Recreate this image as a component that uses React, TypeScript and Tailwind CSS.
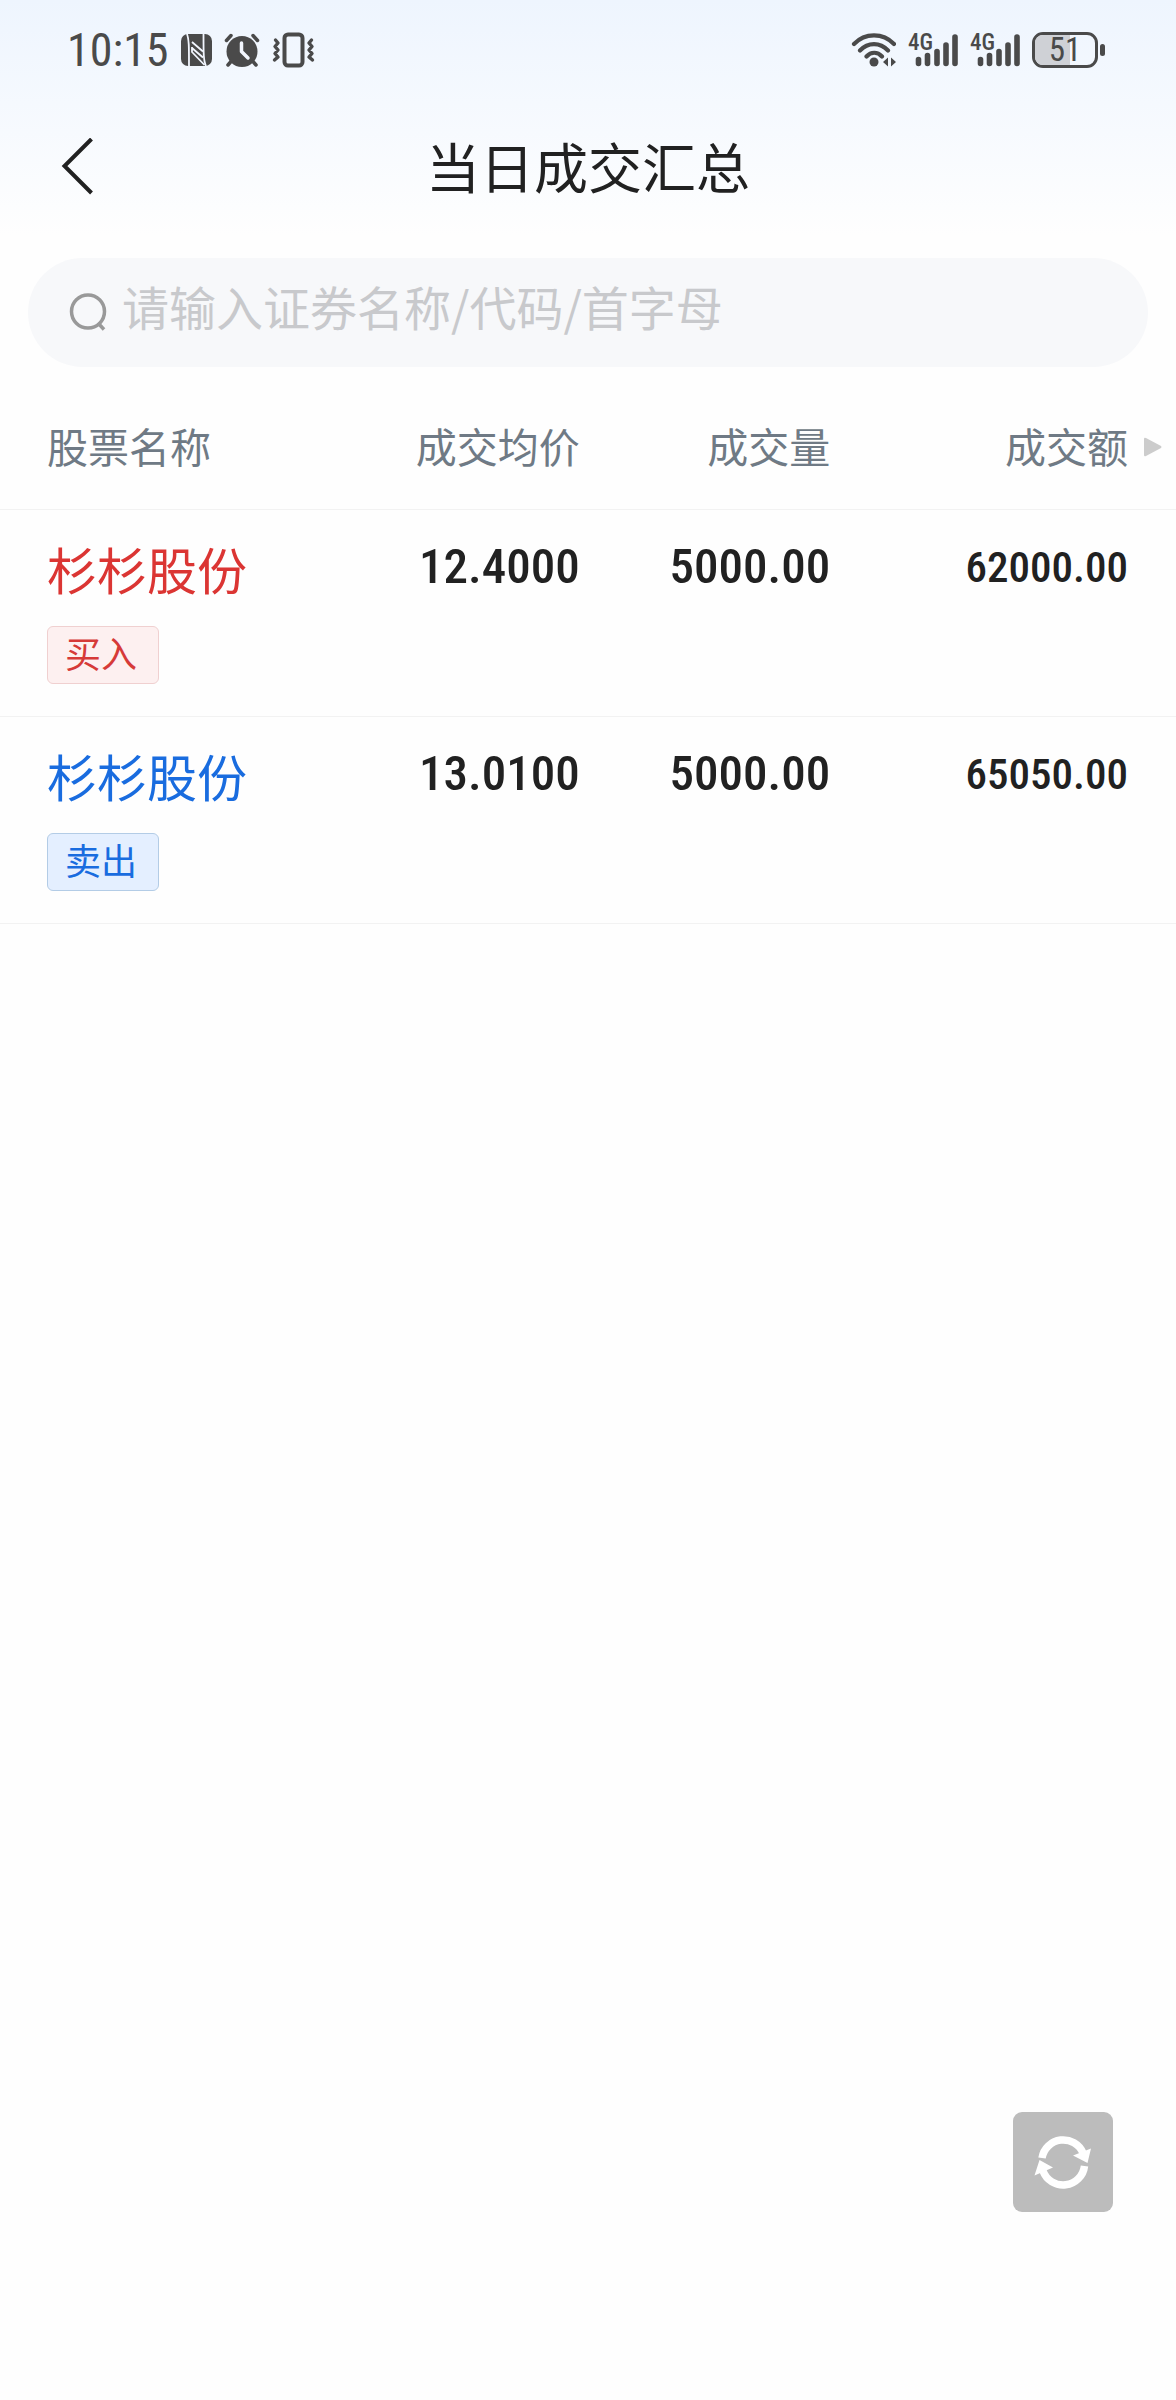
import type { ReactNode } from 'react'

interface Deal {
  id: number
  name: string
  side: 'buy' | 'sell'
  price: string
  volume: string
  amount: string
}

const deals: Deal[] = [
  { id: 1, name: '杉杉股份', side: 'buy', price: '12.4000', volume: '5000.00', amount: '62000.00' },
  { id: 2, name: '杉杉股份', side: 'sell', price: '13.0100', volume: '5000.00', amount: '65050.00' },
]

const sideStyles = {
  buy: { label: '买入', name: 'text-[#db3533]', tag: 'border-[#f0d0d0] bg-[#fdf0f0] text-[#d63a38]' },
  sell: { label: '卖出', name: 'text-[#196cdf]', tag: 'border-[#b3cce6] bg-[#e4efff] text-[#196cdf]' },
}

function NfcIcon() {
  return (
    <svg width="31" height="32" viewBox="0 0 31 32" fill="none" aria-hidden="true">
      <rect width="31" height="32" rx="7" fill="#4a4a4a" />
      <path d="M6 0C8 5 8 12 8 32M25 32C22.500 27 22.500 20 22.500 0" stroke="#f2f6fe" strokeWidth="1.800" />
      <path d="M11 8 22 17.500M11 14 22 23.500M11 13V18L23.500 31" stroke="#f2f6fe" strokeWidth="1.800" />
    </svg>
  )
}

function AlarmIcon() {
  return (
    <svg width="36" height="34" viewBox="0 0 36 34" fill="none" strokeLinecap="round" aria-hidden="true">
      <circle cx="18" cy="18.500" r="15.500" fill="#4a4a4a" />
      <path d="M2.500 7.500 7 2.500M33.500 7.500 29 2.500M7 28.500 4 32M29 28.500 32 32" stroke="#4a4a4a" strokeWidth="3.500" />
      <path d="M17.500 10V18.500L24 25" stroke="#f2f6fe" strokeWidth="3.500" strokeLinejoin="round" />
    </svg>
  )
}

function VibrateIcon() {
  return (
    <svg width="43" height="36" viewBox="0 0 43 36" fill="none" stroke="#4a4a4a" strokeLinecap="round" strokeLinejoin="round" aria-hidden="true">
      <rect x="12.500" y="2.500" width="18" height="31" rx="3.500" strokeWidth="4" />
      <path d="M3.500 8 6 11 3 14.500 6 18 3 21.500 6 25 2.500 28M39.500 8 37 11 40 14.500 37 18 40 21.500 37 25 40.500 28" strokeWidth="3.400" />
    </svg>
  )
}

function WifiIcon() {
  return (
    <svg width="45" height="36" viewBox="0 0 45 36" fill="none" aria-hidden="true">
      <path d="M3 12C14 .5 32 .5 43 12M9 18.500C17 10 29 10 37 18.500M15.500 24.500C20 19.500 26.500 19.500 31 24.500" stroke="#4a4a4a" strokeWidth="4.200" strokeLinecap="round" />
      <circle cx="23" cy="30" r="4.500" fill="#4a4a4a" />
      <path d="M37 25.500V34.500L32 30ZM40 25.500V34.500L45 30Z" fill="#4a4a4a" />
    </svg>
  )
}

function SignalIcon() {
  return (
    <svg width="50" height="36" viewBox="0 0 50 36" className="overflow-visible" aria-hidden="true">
      <text x="0" y="18" fill="#4a4a4a" className="font-[Roboto_Condensed,Roboto,sans-serif] text-[23px] font-medium">
        4G
      </text>
      <path d="M10.500 27.500V31.500M19.500 23.500V31.500M29 19.500V31.500M38 13V31.500M47 5V31.500" stroke="#4a4a4a" strokeWidth="5.600" strokeLinecap="round" />
    </svg>
  )
}

function Battery({ level }: { level: number }) {
  return (
    <div className="flex items-center gap-0.5">
      <div className="relative h-9 w-[66px] rounded-[11px] border-[3px] border-[#4a4a4a]">
        <div className="absolute inset-y-0 left-0 rounded-l-lg bg-[#cfd1d6]" style={{ width: `${level + 8}%` }} />
        <span className="relative block text-center text-[33px] leading-[30px] text-[#4a4a4a]">{level}</span>
      </div>
      <div className="h-3 w-[5px] rounded-sm bg-[#4a4a4a]" />
    </div>
  )
}

function StatusBar() {
  return (
    <div className="flex h-[100px] items-center justify-between pr-[71px] pl-[67px] font-[Roboto_Condensed,Roboto,sans-serif]">
      <div className="flex items-center gap-3">
        <span className="text-[46px] leading-none text-[#4a4a4a]">10:15</span>
        <NfcIcon />
        <AlarmIcon />
        <VibrateIcon />
      </div>
      <div className="flex items-center gap-3">
        <WifiIcon />
        <SignalIcon />
        <SignalIcon />
        <Battery level={51} />
      </div>
    </div>
  )
}

function HeadCell({ children }: { children: ReactNode }) {
  return <th className="h-[122px] p-0 pb-1 text-right font-normal last:pr-12">{children}</th>
}

function DealRow({ deal }: { deal: Deal }) {
  const style = sideStyles[deal.side]

  return (
    <tr className="border-b border-[#f2f2f2] align-top font-[Roboto_Condensed,Roboto,sans-serif] font-medium text-[#212121]">
      <td className="pt-[26px] pb-8 pl-[47px] font-['Noto_Sans_CJK_SC',sans-serif] font-normal">
        <div className={`text-[50px] leading-[64px] ${style.name}`}>{deal.name}</div>
        <span className={`mt-[26px] flex h-[58px] w-28 items-center justify-center rounded-md border pr-1 pb-1.5 text-4xl leading-none ${style.tag}`}>
          {style.label}
        </span>
      </td>
      <td className="pt-[26px] text-right text-[49px] leading-[62px]">{deal.price}</td>
      <td className="pt-[26px] text-right text-[49px] leading-[62px]">{deal.volume}</td>
      <td className="pt-[26px] pr-12 text-right text-[43px] leading-[62px]">{deal.amount}</td>
    </tr>
  )
}

export default function App() {
  return (
    <div className="min-h-screen bg-[#fefefe] font-['Noto_Sans_CJK_SC',sans-serif]">
      <div className="bg-linear-to-b from-[#eef5fe] to-[#fefefe]">
        <StatusBar />
        <header className="grid h-[136px] grid-cols-[1fr_auto_1fr] items-center">
          <button type="button" aria-label="返回" className="ml-[60px] w-fit">
            <svg width="36" height="60" viewBox="0 0 36 60" fill="none" aria-hidden="true">
              <path d="M31.500 1 4.500 28 31.500 55" stroke="#212121" strokeWidth="4" />
            </svg>
          </button>
          <h1 className="pb-1 text-[54px] leading-none text-[#212121]">当日成交汇总</h1>
        </header>
      </div>

      <div className="mx-7 mt-[22px] flex h-[109px] items-center gap-3.5 rounded-full bg-[#f7f8fa] px-10">
        <svg width="40" height="40" viewBox="0 0 40 40" fill="none" className="shrink-0" aria-hidden="true">
          <circle cx="20" cy="18.500" r="16.500" stroke="#999" strokeWidth="3.500" />
          <path d="M30 30 36 36.500" stroke="#999" strokeWidth="3.500" />
        </svg>
        <input
          type="text"
          aria-label="搜索证券"
          placeholder="请输入证券名称/代码/首字母"
          className="h-full w-full bg-transparent pb-3.5 text-[47px] text-[#212121] outline-none placeholder:text-[#c8c9cc]"
        />
      </div>

      <table className="mt-5 w-full table-fixed border-collapse">
        <colgroup>
          <col className="w-[28%]" />
          <col className="w-[21.3%]" />
          <col className="w-[21.3%]" />
          <col />
        </colgroup>
        <thead>
          <tr className="border-b border-[#f2f2f2] text-[41px] leading-none text-[#6f7a85]">
            <th className="h-[122px] p-0 pb-1 pl-[47px] text-left font-normal">股票名称</th>
            <HeadCell>成交均价</HeadCell>
            <HeadCell>成交量</HeadCell>
            <HeadCell>
              <span className="relative">
                成交额
                <svg width="18" height="20" viewBox="0 0 18 20" className="absolute top-1/2 left-full ml-4 -translate-y-2" aria-hidden="true">
                  <path d="M0 2Q0 0 2 1L17 9Q18 10 17 11L2 19Q0 20 0 18Z" fill="#ccc" />
                </svg>
              </span>
            </HeadCell>
          </tr>
        </thead>
        <tbody>
          {deals.map((deal) => (
            <DealRow key={deal.id} deal={deal} />
          ))}
        </tbody>
      </table>

      <button
        type="button"
        aria-label="刷新"
        className="fixed right-[63px] bottom-[188px] size-[100px] rounded-[9px] bg-[#bcbcbc]"
      >
        <svg viewBox="0 0 100 100" fill="none" aria-hidden="true">
          <path d="M29 46A21.500 21.500 0 0 1 70 41M71.500 54A21.500 21.500 0 0 1 30 59" stroke="#fff" strokeWidth="7.500" />
          <path d="M60 43.500 78 36.500 74.500 51ZM26.500 48 40 55.500 21.500 63.500Z" fill="#fff" />
        </svg>
      </button>
    </div>
  )
}
